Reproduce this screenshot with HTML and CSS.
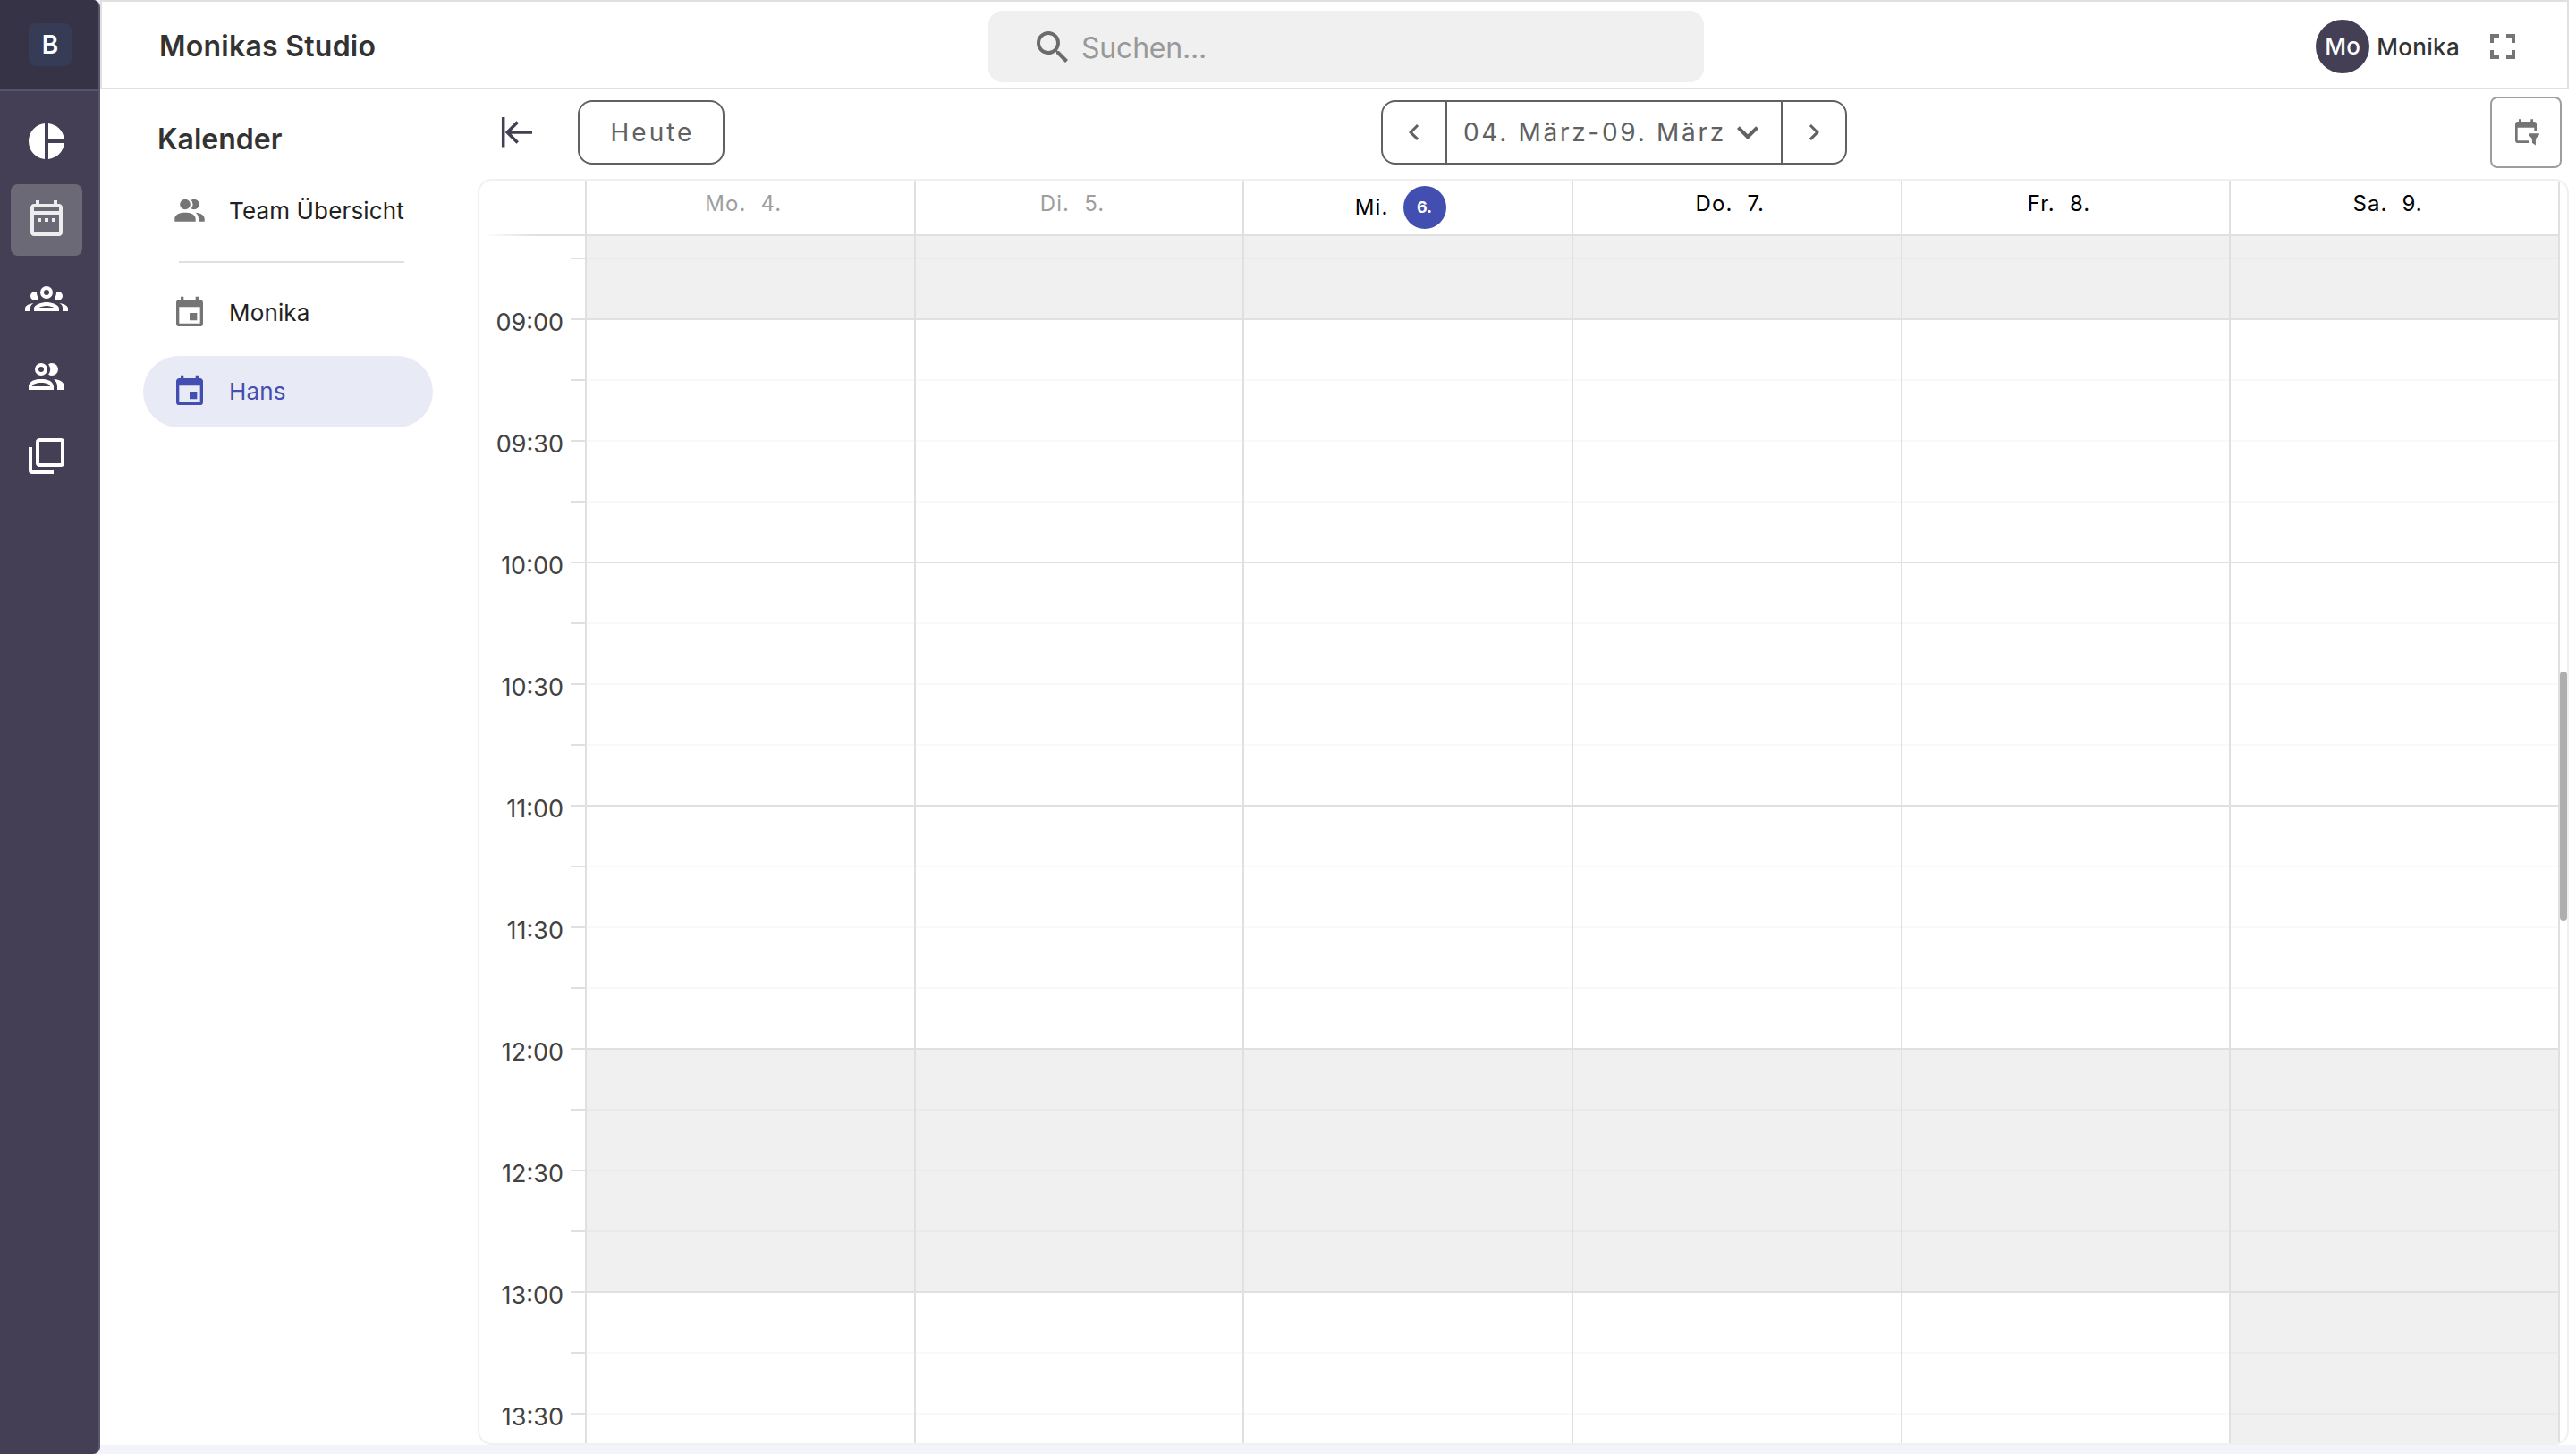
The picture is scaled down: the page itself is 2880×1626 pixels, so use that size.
FILE: index.html
```html
<!DOCTYPE html>
<html lang="de">
<head>
    <meta charset="UTF-8">
    <title>Monikas Studio</title>
    <link rel="stylesheet" href="styles.css">
</head>
<body>
<div class="app">
    <nav class="rail">
        <div class="rail-head"><div class="logo">B</div></div>
        <div class="rail-nav">
            <a class="rail-item"><svg viewBox="0 0 24 24"><path d="M11,2V22C5.9,21.5 2,17.2 2,12C2,6.8 5.9,2.5 11,2M13,2V11H22C21.5,6.2 17.8,2.5 13,2M13,13V22C17.7,21.5 21.5,17.8 22,13H13Z"/></svg></a>
            <a class="rail-item active"><svg viewBox="0 0 24 24"><path d="M7 11H9V13H7V11M21 5V19C21 20.11 20.11 21 19 21H5C3.89 21 3 20.1 3 19V5C3 3.9 3.9 3 5 3H6V1H8V3H16V1H18V3H19C20.11 3 21 3.9 21 5M5 5V7H19V5H5M19 19V9H5V19H19M15 13V11H17V13H15M11 13V11H13V13H11Z"/></svg></a>
            <a class="rail-item"><svg viewBox="0 0 24 24"><path d="M12,5A3.5,3.5 0 0,0 8.5,8.5A3.5,3.5 0 0,0 12,12A3.5,3.5 0 0,0 15.5,8.5A3.5,3.5 0 0,0 12,5M12,7A1.5,1.5 0 0,1 13.5,8.5A1.5,1.5 0 0,1 12,10A1.5,1.5 0 0,1 10.5,8.5A1.5,1.5 0 0,1 12,7M5.5,8A2.5,2.5 0 0,0 3,10.5C3,11.44 3.53,12.25 4.29,12.68C4.65,12.88 5.06,13 5.5,13C5.94,13 6.35,12.88 6.71,12.68C7.08,12.47 7.39,12.17 7.62,11.81C6.89,10.86 6.5,9.7 6.5,8.5C6.5,8.41 6.5,8.31 6.5,8.22C6.2,8.08 5.86,8 5.5,8M18.5,8C18.14,8 17.8,8.08 17.5,8.22C17.5,8.31 17.5,8.41 17.5,8.5C17.5,9.7 17.11,10.86 16.38,11.81C16.5,12 16.63,12.15 16.78,12.3C16.94,12.45 17.1,12.58 17.29,12.68C17.65,12.88 18.06,13 18.5,13C18.94,13 19.35,12.88 19.71,12.68C20.47,12.25 21,11.44 21,10.5A2.5,2.5 0 0,0 18.5,8M12,14C9.66,14 5,15.17 5,17.5V19H19V17.5C19,15.17 14.34,14 12,14M4.71,14.55C2.78,14.78 0,15.76 0,17.5V19H3V17.07C3,16.06 3.69,15.22 4.71,14.55M19.29,14.55C20.31,15.22 21,16.06 21,17.07V19H24V17.5C24,15.76 21.22,14.78 19.29,14.55M12,16C13.53,16 15.24,16.5 16.23,17H7.77C8.76,16.5 10.47,16 12,16Z"/></svg></a>
            <a class="rail-item"><svg viewBox="0 0 24 24"><path d="M13.07 10.41A5 5 0 0 0 13.07 4.59A3.39 3.39 0 0 1 15 4A3.5 3.5 0 0 1 15 11A3.39 3.39 0 0 1 13.07 10.41M5.5 7.5A3.5 3.5 0 1 1 9 11A3.5 3.5 0 0 1 5.5 7.5M7.5 7.5A1.5 1.5 0 1 0 9 6A1.5 1.5 0 0 0 7.5 7.5M16 17V19H2V17S2 13 9 13 16 17 16 17M14 17C13.86 16.22 12.67 15 9 15S4.07 16.31 4 17M15.95 13A5.32 5.32 0 0 1 18 17V19H22V17S22 13.37 15.94 13Z"/></svg></a>
            <a class="rail-item"><svg viewBox="0 0 24 24"><path d="M20,16V4H8V16H20M22,16A2,2 0 0,1 20,18H8C6.89,18 6,17.1 6,16V4C6,2.89 6.89,2 8,2H20A2,2 0 0,1 22,4V16M16,20V22H4A2,2 0 0,1 2,20V7H4V20H16Z"/></svg></a>
        </div>
    </nav>

    <div class="page">
        <header class="topbar">
            <h1 class="brand">Monikas Studio</h1>
            <div class="search">
                <svg viewBox="0 0 24 24"><path d="M9.5,3A6.5,6.5 0 0,1 16,9.5C16,11.11 15.41,12.59 14.44,13.73L14.71,14H15.5L20.5,19L19,20.5L14,15.5V14.71L13.73,14.44C12.59,15.41 11.11,16 9.5,16A6.5,6.5 0 0,1 3,9.5A6.5,6.5 0 0,1 9.5,3M9.5,5C7,5 5,7 5,9.5C5,12 7,14 9.5,14C12,14 14,12 14,9.5C14,7 12,5 9.5,5Z"/></svg>
                <span>Suchen...</span>
            </div>
            <div class="user">
                <span class="avatar">Mo</span>
                <span class="user-name">Monika</span>
                <svg viewBox="0 0 24 24"><path d="M5,5H10V7H7V10H5V5M14,5H19V10H17V7H14V5M17,14H19V19H14V17H17V14M10,17V19H5V14H7V17H10Z"/></svg>
            </div>
        </header>

        <div class="content">
            <aside class="side">
                <h2>Kalender</h2>
                <a class="side-item"><svg viewBox="0 0 24 24"><path d="M16 17V19H2V17S2 13 9 13 16 17 16 17M12.5 7.5A3.5 3.5 0 1 0 9 11A3.5 3.5 0 0 0 12.5 7.5M15.94 13A5.32 5.32 0 0 1 18 17V19H22V17S22 13.37 15.94 13M15 4A3.39 3.39 0 0 0 13.07 4.59A5 5 0 0 1 13.07 10.41A3.39 3.39 0 0 0 15 11A3.5 3.5 0 0 0 15 4Z"/></svg><span>Team Übersicht</span></a>
                <hr>
                <a class="side-item"><svg viewBox="0 0 24 24"><path d="M19,19H5V8H19M16,1V3H8V1H6V3H5C3.89,3 3,3.89 3,5V19A2,2 0 0,0 5,21H19A2,2 0 0,0 21,19V5C21,3.89 20.1,3 19,3H18V1M17,12H12V17H17V12Z"/></svg><span>Monika</span></a>
                <a class="side-item selected"><svg viewBox="0 0 24 24"><path d="M19,19H5V8H19M16,1V3H8V1H6V3H5C3.89,3 3,3.89 3,5V19A2,2 0 0,0 5,21H19A2,2 0 0,0 21,19V5C21,3.89 20.1,3 19,3H18V1M17,12H12V17H17V12Z"/></svg><span>Hans</span></a>
            </aside>

            <main class="main">
                <div class="toolbar">
                    <div class="tool-left">
                        <svg class="collapse" viewBox="0 0 36 36"><path d="M2.7 1v33.5M6.5 18h28.5M18.7 6.5L7.2 18l11.5 11.5"/></svg>
                        <button class="btn">Heute</button>
                    </div>
                    <div class="range">
                        <button class="step"><svg viewBox="0 0 24 24"><path d="M15.41,16.58L10.83,12L15.41,7.41L14,6L8,12L14,18L15.41,16.58Z"/></svg></button>
                        <button class="dates">04. März-09. März<svg viewBox="0 0 24 24"><path d="M7.41,8.58L12,13.17L16.59,8.58L18,10L12,16L6,10L7.41,8.58Z"/></svg></button>
                        <button class="step"><svg viewBox="0 0 24 24"><path d="M8.59,16.58L13.17,12L8.59,7.41L10,6L16,12L10,18L8.59,16.58Z"/></svg></button>
                    </div>
                    <button class="filter"><svg viewBox="0 0 24 24"><path d="M19 3H18V1H16V3H8V1H6V3H5C3.89 3 3 3.9 3 5V19C3 20.1 3.89 21 5 21H15V19H5V8H19V11H21V5C21 3.9 20.1 3 19 3M14.3 13H23.1V14L20.2 17.5V22.8L17.2 20.8V17.5L14.3 14Z"/></svg></button>
                </div>

                <div class="calendar">
                    <div class="days">
                        <div class="corner"></div>
                        <div class="day past"><span>Mo.</span><span>4.</span></div>
                        <div class="day past"><span>Di.</span><span>5.</span></div>
                        <div class="day today"><span>Mi.</span><span class="dot">6.</span></div>
                        <div class="day"><span>Do.</span><span>7.</span></div>
                        <div class="day"><span>Fr.</span><span>8.</span></div>
                        <div class="day"><span>Sa.</span><span>9.</span></div>
                    </div>
                    <div class="grid" id="grid"></div>
                    <div class="thumb"></div>
                </div>
            </main>
        </div>
    </div>
</div>

<script type="text/javascript">
    var grid = document.getElementById("grid");

    // geschlossene Zeiten (Minuten seit Mitternacht), Samstag ab 13 Uhr zu
    function isClosed(day, min) {
        if (min < 540) return true;
        if (min >= 720 && min < 780) return true;
        return day == 5 && min >= 780;
    }

    function pad(n) {
        return n < 10 ? "0" + n : "" + n;
    }

    // Zeitspalte
    var times = document.createElement("div");
    times.className = "times";
    for (var m = 510; m <= 810; m += 15) {
        var t = document.createElement("div");
        t.className = "tick";
        if (m % 30 == 0 && m >= 540) {
            t.innerHTML = "<span>" + pad(Math.floor(m / 60)) + ":" + pad(m % 60) + "</span>";
        }
        times.appendChild(t);
    }
    grid.appendChild(times);

    // Tagesspalten
    for (var d = 0; d < 6; d++) {
        var col = document.createElement("div");
        col.className = "col";
        for (var m = 510; m <= 810; m += 15) {
            var s = document.createElement("div");
            s.className = "slot" + (m % 60 == 0 ? " hour" : "") + (isClosed(d, m) ? " closed" : "");
            col.appendChild(s);
        }
        grid.appendChild(col);
    }
</script>
</body>
</html>
```
FILE: styles.css
```css
*{
    box-sizing:border-box;
}

body{
    margin:0;
    background:#f3f4fa;
    font-family:"Inter",sans-serif;
    font-size:28px;
    color:#212121;
}

svg{
    display:block;
    fill:currentColor;
    flex:none;
}

button{
    font:inherit;
    color:inherit;
    background:none;
    border:0;
    padding:0;
}

.app{
    display:flex;
    width:2880px;
    height:1626px;
    overflow:hidden;
}

/* linke Leiste */
.rail{
    width:112px;
    flex:none;
    background:#443f54;
    border-right:2px solid #5a566b;
    border-radius:0 8px 8px 0;
    overflow:hidden;
}

.rail-head{
    height:102px;
    padding:26px 0 0 32px;
    background:#373347;
    border-bottom:2px solid #57536a;
}

.logo{
    width:48px;
    height:48px;
    border-radius:8px;
    background:#363c56;
    color:#fff;
    font-weight:600;
    line-height:48px;
    text-align:center;
}

.rail-nav{
    display:flex;
    flex-direction:column;
    gap:8px;
    padding:16px 0 0 12px;
}

.rail-item{
    width:80px;
    height:80px;
    padding:16px;
    border-radius:8px;
    color:#fff;
}

.rail-item.active{
    background:#6c6977;
    color:#ededee;
}

.rail-item svg{
    width:48px;
    height:48px;
}

.page{
    flex:1;
    height:1616px;
    background:#fff;
}

/* Kopfzeile */
.topbar{
    width:2760px;
    height:100px;
    border:2px solid #e0e0e0;
    display:grid;
    grid-template-columns:991px 800px 1fr;
    align-items:center;
}

.brand{
    margin:0;
    padding:3px 0 0 64px;
    font-size:32px;
    font-weight:600;
    letter-spacing:.25px;
    color:#333;
}

.search{
    height:80px;
    margin-top:4px;
    padding:2px 0 0 48px;
    border-radius:16px;
    background:#f0f0f0;
    display:flex;
    align-items:center;
    gap:8px;
    font-size:32px;
    letter-spacing:-.2px;
    color:#999;
}

.search svg{
    width:48px;
    height:48px;
    color:#6b6b6b;
}

.user{
    display:flex;
    align-items:center;
    justify-content:flex-end;
    padding:4px 48px 0 0;
    font-size:26px;
    font-weight:450;
    letter-spacing:.3px;
    color:#333;
}

.avatar{
    width:60px;
    height:60px;
    border-radius:50%;
    background:#443f54;
    color:#fff;
    line-height:60px;
    text-align:center;
}

.user-name{
    margin:0 24px 0 8px;
}

.user svg{
    width:48px;
    height:48px;
    color:#757575;
}

.content{
    display:flex;
    height:1516px;
}

/* Kalenderliste */
.side{
    width:422px;
    flex:none;
    padding:32px 50px 0 48px;
}

.side h2{
    margin:0 0 16px 16px;
    height:48px;
    line-height:48px;
    font-size:32px;
    font-weight:600;
    color:#333;
}

.side hr{
    height:2px;
    margin:16px 32px 16px 40px;
    border:0;
    background:#e0e0e0;
}

.side-item{
    display:flex;
    align-items:center;
    gap:24px;
    height:80px;
    padding-left:32px;
    border-radius:40px;
    margin-bottom:8px;
    font-size:26px;
    letter-spacing:.15px;
}

.side-item span{
    padding-bottom:2px;
}

.side-item svg{
    width:40px;
    height:40px;
    color:#757575;
}

.side-item.selected{
    background:#e8eaf6;
    color:#434fb0;
}

.side-item.selected svg{
    color:#434fb0;
}

.main{
    width:2338px;
    flex:none;
}

/* Werkzeugleiste */
.toolbar{
    height:100px;
    padding:8px 8px 0 26px;
    display:flex;
    align-items:flex-start;
    color:#616161;
    font-weight:400;
}

.tool-left{
    display:flex;
    align-items:center;
    width:984px;
    padding-top:4px;
}

.collapse{
    width:36px;
    height:36px;
    margin-right:50px;
    fill:none;
    stroke:#443f54;
    stroke-width:3.5;
}

.btn{
    width:164px;
    height:72px;
    padding-left:3px;
    border:2px solid #616161;
    border-radius:16px;
    letter-spacing:3px;
}

.range{
    display:flex;
    width:521px;
    height:72px;
    margin-top:4px;
    border:2px solid #616161;
    border-radius:16px;
}

.step{
    width:70px;
    display:flex;
    align-items:center;
    justify-content:center;
}

.step svg{
    width:36px;
    height:36px;
}

.dates{
    flex:1;
    display:flex;
    align-items:center;
    padding-left:18px;
    border-left:2px solid #616161;
    border-right:2px solid #616161;
    letter-spacing:2.7px;
    white-space:nowrap;
}

.dates svg{
    width:48px;
    height:48px;
}

.filter{
    width:80px;
    height:80px;
    margin-left:auto;
    padding:22px;
    border:2px solid #9e9e9e;
    border-radius:8px;
    color:#757575;
}

.filter svg{
    width:32px;
    height:32px;
}

/* Kalender */
.calendar{
    position:relative;
    height:1416px;
    border:2px solid #f0f0f0;
    border-radius:16px;
    overflow:hidden;
}

.days,
.grid{
    display:grid;
    width:2326px;
    grid-template-columns:120px repeat(6,1fr);
}

.days{
    height:62px;
    font-size:24px;
    letter-spacing:1.1px;
    color:#000;
}

.corner{
    border-right:2px solid #e0e0e0;
    background:linear-gradient(to right,transparent 4px,#e0e0e0 60px) bottom/100% 2px no-repeat;
}

.day{
    display:flex;
    justify-content:center;
    gap:16px;
    padding:11px 15px 0 0;
    line-height:30px;
    border-right:2px solid #e0e0e0;
    border-bottom:2px solid #e0e0e0;
}

.day.past{
    color:#9e9e9e;
}

.day.today{
    align-items:center;
    padding:0 17px 0 0;
}

.dot{
    width:48px;
    height:48px;
    border-radius:50%;
    background:#434fb0;
    color:#fff;
    font-size:18px;
    font-weight:700;
    line-height:48px;
    text-align:center;
    letter-spacing:0;
}

.grid{
    height:1350px;
    overflow:hidden;
}

.times{
    border-right:2px solid #e0e0e0;
    margin-top:-44px;
}

.tick{
    height:68px;
    padding-right:24px;
    text-align:right;
    font-size:27px;
    line-height:32px;
    color:#424242;
    background:linear-gradient(#e0e0e0,#e0e0e0) right top/16px 2px no-repeat;
}

.tick span{
    position:relative;
    top:-11px;
}

.col{
    margin-top:-44px;
    border-right:2px solid #e0e0e0;
}

.slot{
    height:68px;
    border-top:2px solid rgba(0,0,0,.024);
}

.slot.hour{
    border-top-color:#e0e0e0;
}

.slot.closed{
    background-color:#f0f0f0;
}

/* Scrollbalken liegt ueber dem Raster */
.thumb{
    position:absolute;
    right:0;
    top:549px;
    width:8px;
    height:279px;
    border-radius:4px;
    background:#aeaeae;
}
```
